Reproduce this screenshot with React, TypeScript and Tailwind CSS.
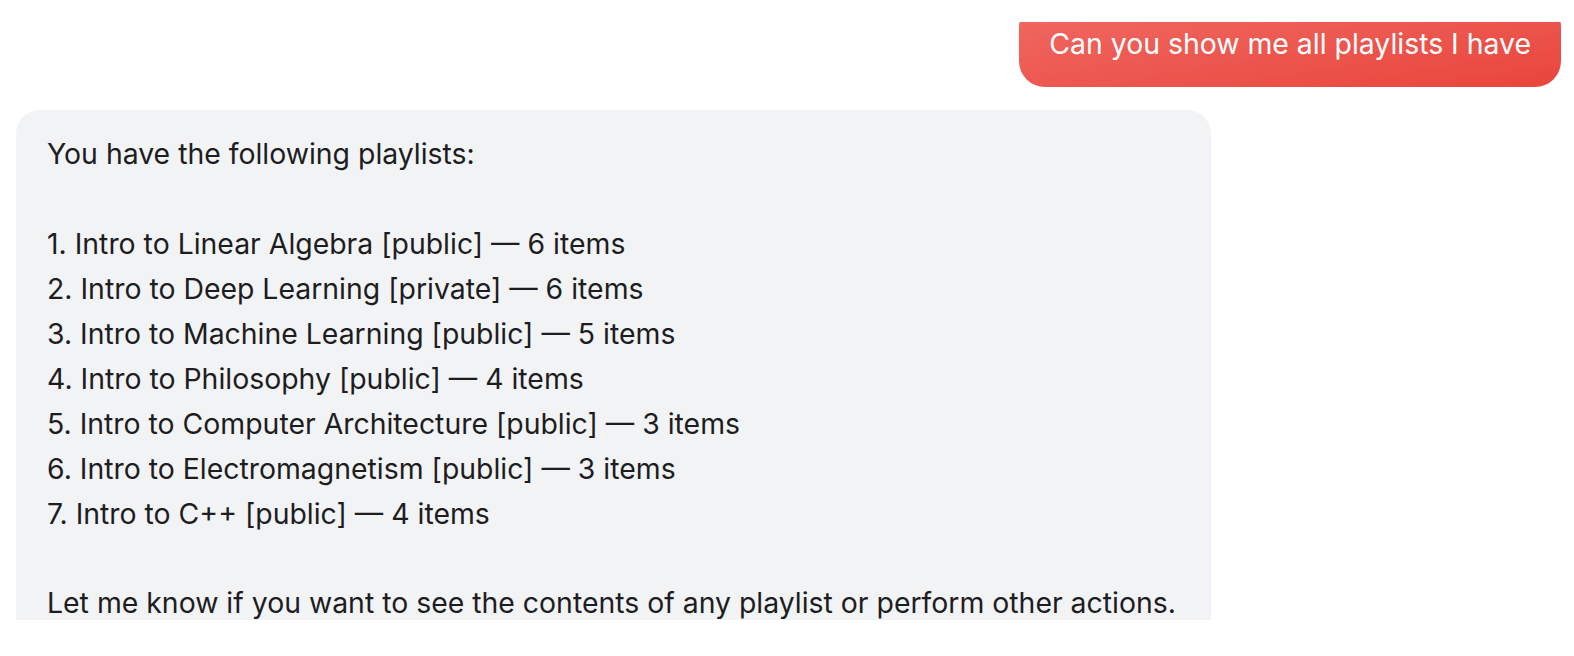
import React from "react";

const lines = [
  "1. Intro to Linear Algebra [public] — 6 items",
  "2. Intro to Deep Learning [private] — 6 items",
  "3. Intro to Machine Learning [public] — 5 items",
  "4. Intro to Philosophy [public] — 4 items",
  "5. Intro to Computer Architecture [public] — 3 items",
  "6. Intro to Electromagnetism [public] — 3 items",
  "7. Intro to C++ [public] — 4 items",
];

export default function App() {
  return (
    <div
      className="w-[1574px] h-[656px] bg-white pt-[22px]"
      style={{ fontFamily: 'Inter, "Noto Sans", sans-serif' }}
    >
      <div className="h-[598px] overflow-hidden">
        <div className="-mt-[21px] flex flex-col">
          <div className="flex justify-end pr-[13px]">
            <div className="rounded-[26px] bg-gradient-to-br from-[#f06a64] to-[#e9443b] pl-[30px] pr-[30px] py-[21px] text-[28.4px] leading-[44px] text-white">
              Can you show me all playlists I have
            </div>
          </div>
          <div className="mt-[23px] pl-[16px]">
            <div className="w-[1195px] rounded-[24px] bg-[#f2f3f5] px-[31px] pt-[22px] pb-[24px] text-[28.4px] leading-[44.93px] text-[#1d1d1f] whitespace-pre-line">
              {"You have the following playlists:\n\n" +
                lines.join("\n") +
                "\n\nLet me know if you want to see the contents of any playlist or perform other actions."}
            </div>
          </div>
        </div>
      </div>
    </div>
  );
}
